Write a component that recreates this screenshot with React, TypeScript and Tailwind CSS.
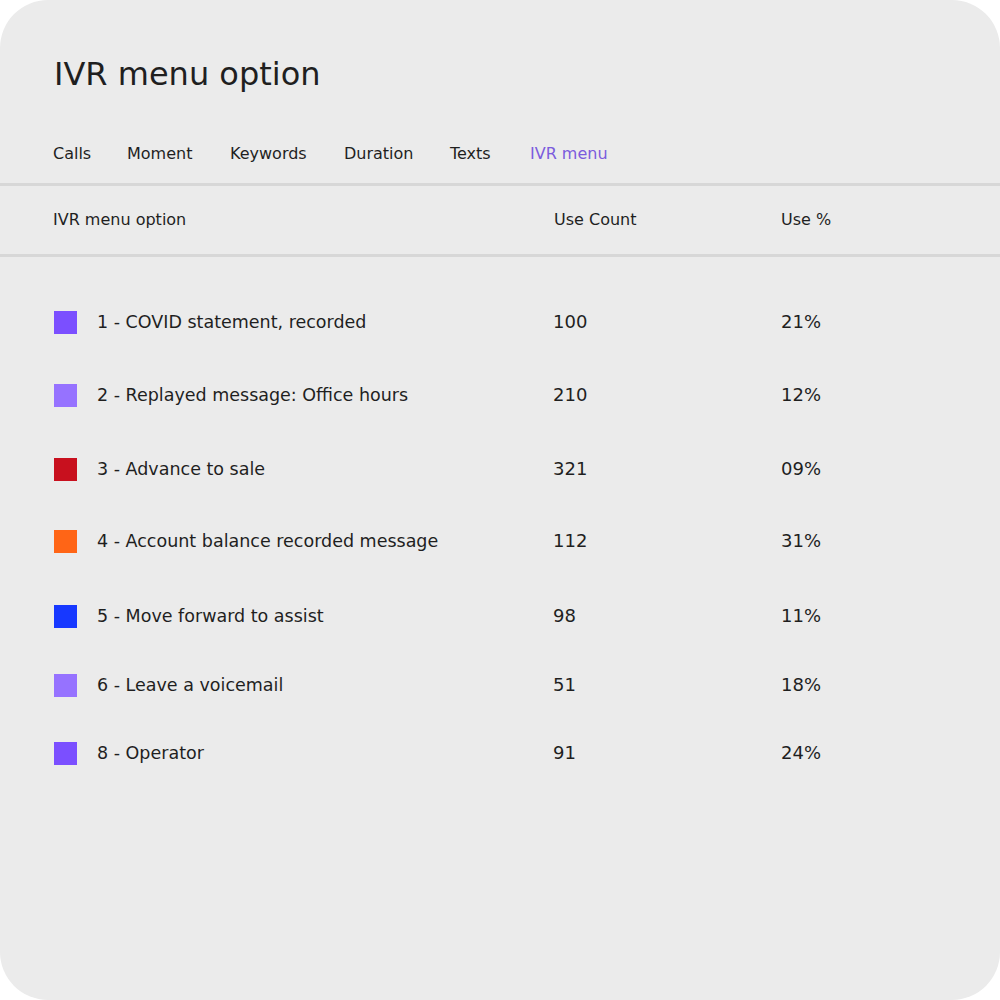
import React from "react";

const tabs = [
  { label: "Calls", w: "w-[74px]" },
  { label: "Moment", w: "w-[103px]" },
  { label: "Keywords", w: "w-[114px]" },
  { label: "Duration", w: "w-[106px]" },
  { label: "Texts", w: "w-[80px]" },
  { label: "IVR menu", w: "w-[90px]" },
];

const rows = [
  { color: "bg-[#7b4fff]", label: "1 - COVID statement, recorded", count: "100", pct: "21%", mt: "mt-[53px]" },
  { color: "bg-[#9672ff]", label: "2 - Replayed message: Office hours", count: "210", pct: "12%", mt: "mt-[49px]" },
  { color: "bg-[#c8101e]", label: "3 - Advance to sale", count: "321", pct: "09%", mt: "mt-[50px]" },
  { color: "bg-[#ff6516]", label: "4 - Account balance recorded message", count: "112", pct: "31%", mt: "mt-[48px]" },
  { color: "bg-[#1738ff]", label: "5 - Move forward to assist", count: "98", pct: "11%", mt: "mt-[51px]" },
  { color: "bg-[#9672ff]", label: "6 - Leave a voicemail", count: "51", pct: "18%", mt: "mt-[45px]" },
  { color: "bg-[#7b4fff]", label: "8 - Operator", count: "91", pct: "24%", mt: "mt-[44px]" },
];

export default function App() {
  return (
    <div className="w-[1000px] h-[1000px] bg-white" style={{ fontFamily: '"DejaVu Sans", sans-serif' }}>
      <div className="h-full rounded-[48px] bg-[#ebebeb] text-[#1f1f1f] overflow-hidden">
        <h1 className="pl-[54px] pt-[54px] text-[32px] leading-[40px] font-normal">IVR menu option</h1>
        <div className="mt-[50px] flex pl-[53px] text-[16px] leading-[20px] pb-[19px]">
          {tabs.map((t, i) => (
            <div
              key={t.label}
              className={i === tabs.length - 1 ? `${t.w} text-[#7b5cdd]` : t.w}
            >
              {t.label}
            </div>
          ))}
        </div>
        <div className="h-[3px] bg-[#d7d7d7]" />
        <div className="flex pl-[53px] pt-[24px] pb-[24px] text-[16px] leading-[20px]">
          <div className="w-[501px]">IVR menu option</div>
          <div className="w-[227px]">Use Count</div>
          <div>Use %</div>
        </div>
        <div className="h-[3px] bg-[#d7d7d7]" />
        <div>
          {rows.map((r) => (
            <div key={r.label} className={`flex items-center pl-[54px] h-[24px] ${r.mt}`}>
              <div className="w-[499px] flex items-center">
                <div className={`w-[23px] h-[23px] ${r.color}`} />
                <div className="ml-[20px] text-[17.5px] leading-[24px]">{r.label}</div>
              </div>
              <div className="w-[228px] text-[18px] leading-[24px]">{r.count}</div>
              <div className="text-[18px] leading-[24px]">{r.pct}</div>
            </div>
          ))}
        </div>
      </div>
    </div>
  );
}
